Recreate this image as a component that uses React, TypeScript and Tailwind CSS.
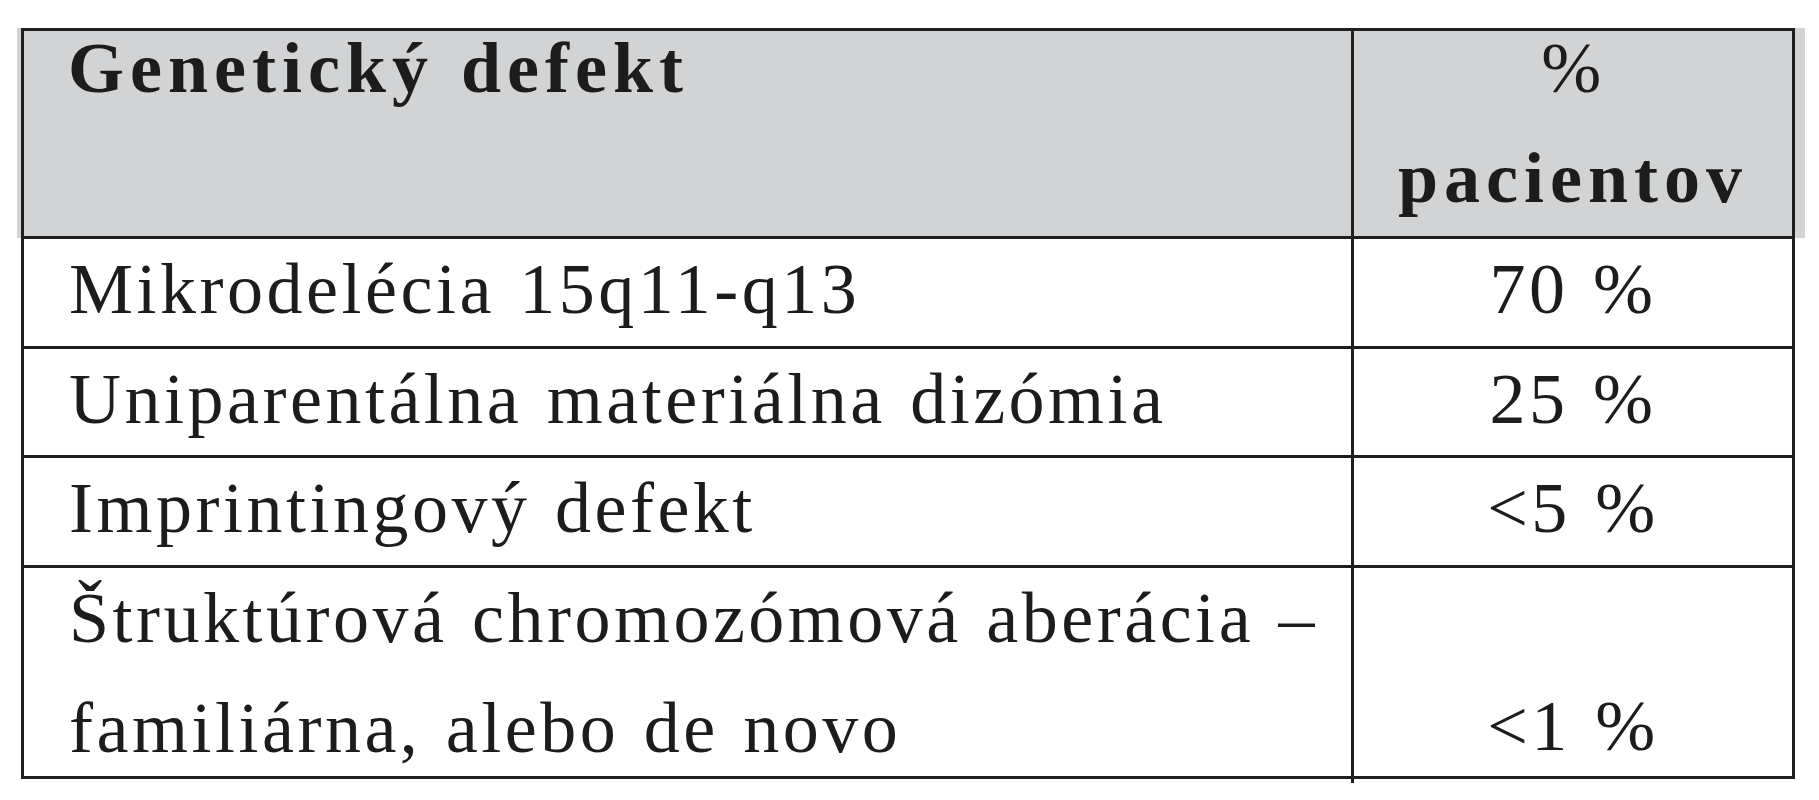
import React from 'react'

const rows = [
  { name: 'Mikrodelécia 15q11-q13', value: '70 %' },
  { name: 'Uniparentálna materiálna dizómia', value: '25 %' },
  { name: 'Imprintingový defekt', value: '<5 %' }
]

const App = () => {
  return (
    <div
      className="min-h-[800px] w-[1819px] bg-white pt-[28px] pl-[21px] text-[#1c1c1c] bg-[linear-gradient(#d1d3d5,#d1d3d5)] bg-no-repeat bg-[length:1788px_210px] bg-[position:17px_28px]"
      style={{ fontFamily: '"Liberation Serif", "DejaVu Serif", serif' }}
    >
      <div className="w-[1774px] border-[3px] border-[#1e1e1e] bg-white text-[72px] tracking-[3.5px] [word-spacing:3px]">
        <div className="grid grid-cols-[1330px_438px]">
          {/* header */}
          <div className="h-[208px] border-r-[3px] border-b-[3px] border-[#1e1e1e] bg-[#d1d3d5] pl-[44px]">
            <div className="font-bold tracking-[6px] leading-[74px]">Genetický defekt</div>
          </div>
          <div className="h-[208px] border-b-[3px] border-[#1e1e1e] bg-[#d1d3d5] text-center">
            <div className="leading-[74px]">%</div>
            <div className="mt-[36px] font-bold tracking-[6px] leading-[74px]">pacientov</div>
          </div>

          {rows.map((row, i) => (
            <React.Fragment key={i}>
              <div
                className={
                  i === 1
                    ? 'h-[109px] border-r-[3px] border-b-[3px] border-[#1e1e1e] pl-[45px] leading-[100px] whitespace-nowrap'
                    : 'h-[110px] border-r-[3px] border-b-[3px] border-[#1e1e1e] pl-[45px] leading-[100px] whitespace-nowrap'
                }
              >
                {row.name}
              </div>
              <div
                className={
                  i === 1
                    ? 'h-[109px] border-b-[3px] border-[#1e1e1e] text-center leading-[100px]'
                    : 'h-[110px] border-b-[3px] border-[#1e1e1e] text-center leading-[100px]'
                }
              >
                {row.value}
              </div>
            </React.Fragment>
          ))}

          {/* last row, two lines */}
          <div className="h-[208px] border-r-[3px] border-[#1e1e1e] pl-[45px] whitespace-nowrap">
            <div className="-mt-[5px] leading-[110px]">
              Štruktúrová chromozómová aberácia –<br />
              familiárna, alebo de novo
            </div>
          </div>
          <div className="h-[208px] pt-[110px] text-center leading-[96px]">&lt;1 %</div>
        </div>
      </div>
      <div className="ml-[1330px] h-[4px] w-[3px] bg-[#1e1e1e]" />
    </div>
  )
}

export default App
